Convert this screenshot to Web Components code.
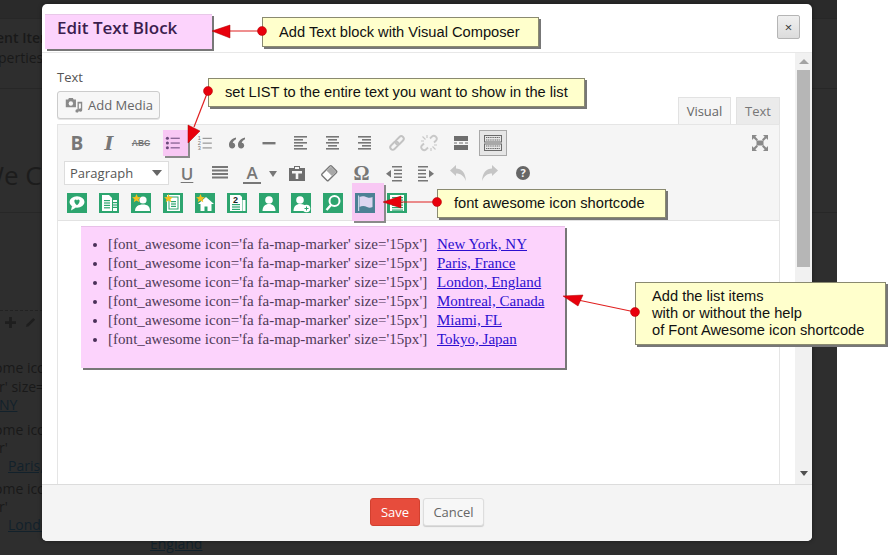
<!DOCTYPE html>
<html lang="en"><head><meta charset="utf-8"><title>Edit Text Block</title>
<style>
html,body{margin:0;padding:0;background:#fff}
body{width:896px;height:555px;overflow:hidden;position:relative;font-family:"Open Sans",sans-serif}
</style></head><body>
<bg-page></bg-page>
<modal-window></modal-window>
<anno-layer></anno-layer>
<script>
const G='#777';
const lines=(arr,c=G,w=1.6)=>arr.map(l=>`<rect x="${l[0]}" y="${l[1]}" width="${l[2]}" height="${w}" fill="${c}"/>`).join('');
const star=`<path d="M5.5 1l1.3 2.9 3.1.3-2.4 2 .8 3-2.8-1.6-2.8 1.6.8-3-2.4-2 3.1-.3z" fill="#f3c01e"/>`;
const dlines=(x,y,w,n,s=2.4)=>Array.from({length:n},(_,i)=>`<rect x="${x}" y="${y+i*s}" width="${w}" height="1.2" fill="#2da56f"/>`).join('');
const person=`<circle cx="10" cy="7" r="3.8" fill="#fff"/><path d="M3.5 18c0-4.5 2.8-7 6.5-7s6.5 2.500 6.500 7z" fill="#fff"/>`;
const GREEN={
 chat:`<ellipse cx="10" cy="9" rx="7.500" ry="5.800" fill="#fff"/><path d="M5 13l-1 4.500 5-3z" fill="#fff"/><path d="M10 12.200C6.500 9.500 7 6.500 8.600 6.500c.7 0 1.100.4 1.400 1 .3-.6.7-1 1.400-1 1.600 0 2.100 3-1.400 5.700z" fill="#2da56f"/>`,
 docs:`<path d="M3 2h7l3 3v13H3z" fill="#fff"/>${dlines(5,7,6,4)}<rect x="14" y="7" width="4" height="11" fill="#fff"/>${dlines(14,9,4,3)}`,
 pstar:`<circle cx="12" cy="7" r="3.600" fill="#fff"/><path d="M4 18c0-4.500 3.500-6.500 8-6.500s7 2 7 6.500z" fill="#fff"/>${star}`,
 dstar:`<path d="M4 2h13v16H4z" fill="#fff"/><rect x="5.500" y="3.500" width="10" height="13" fill="#2da56f"/><rect x="6.500" y="4.500" width="8" height="11" fill="#fff"/>${dlines(8,8,5,3)}${star}`,
 hstar:`<path d="M11 4l8 7h-2.500v7h-4v-4.500h-3V18h-4v-7H3z" fill="#fff"/>${star}`,
 doc2:`<path d="M3 2h10l2 2v14H3z" fill="#fff"/><text x="8.500" y="9.500" font-family="Liberation Sans" font-weight="700" font-size="9" text-anchor="middle" fill="#222">2</text>${dlines(5,11,8,3)}<rect x="15.500" y="7" width="3" height="11" fill="#fff"/>`,
 person:person,
 padd:`<circle cx="9" cy="7" r="3.800" fill="#fff"/><path d="M2.500 18c0-4.500 2.800-7 6.500-7s5 1 6 3v4z" fill="#fff"/><circle cx="15.500" cy="15.500" r="3.800" fill="#fff"/><path d="M13.500 15h4v1h-4zM15 13.500h1v4h-1z" fill="#2da56f"/>`,
 search:`<circle cx="11.500" cy="8" r="5" fill="none" stroke="#fff" stroke-width="2"/><path d="M8 12l-4.500 5" stroke="#fff" stroke-width="2.400"/>`,
 flag:`<path d="M3 2.500h1.200V18H3z" fill="#c9d4e8"/><path d="M4.500 4c3-1.500 5.500-.5 7.500.3s4 .7 5.500-.3v10c-2 1-3.500 1-5.500 0s-5-1.500-7.500 0z" fill="#dcd6f0"/>`,
 dlist:`<path d="M3 2h14v16H3z" fill="#fff"/>${dlines(5,4,11,6,2.500)}`
};
const five=(s)=>lines(s.map((r,i)=>[r[0],3+i*3,r[1]]));
const SMALL={ul:16,ol:16};
const TB={
 ul:`<g fill="#6a4a7a"><circle cx="3" cy="4" r="1.900"/><circle cx="3" cy="10" r="1.900"/><circle cx="3" cy="16" r="1.900"/><rect x="7" y="3.400" width="11.500" height="1.300"/><rect x="7" y="9.400" width="11.500" height="1.300"/><rect x="7" y="15.400" width="11.500" height="1.300"/></g>`,
 ol:`<g fill="#888"><rect x="7" y="3.500" width="11.500" height="1.300"/><rect x="7" y="9.500" width="11.500" height="1.300"/><rect x="7" y="15.500" width="11.500" height="1.300"/></g><g font-family="Liberation Sans" font-size="7" fill="#777"><text x="1" y="6">1</text><text x="1" y="12.300">2</text><text x="1" y="18.500">3</text></g>`,
 quote:`<path d="M9 4.500C5 5.500 2 8 2 12c0 2 1.200 3.500 3.200 3.500 1.700 0 3-1.200 3-2.900 0-1.600-1.100-2.700-2.500-2.800.4-1.500 1.700-2.800 3.300-3.600zM18 4.500c-4 1-7 3.500-7 7.500 0 2 1.200 3.500 3.200 3.500 1.700 0 3-1.200 3-2.900 0-1.600-1.100-2.700-2.500-2.800.4-1.500 1.700-2.800 3.300-3.600z" fill="${G}"/>`,
 hr:`<rect x="3.500" y="9" width="13" height="2.400" fill="${G}"/>`,
 al:five([[3,13],[3,9],[3,13],[3,9],[3,13]]),
 ac:five([[3,13],[5,9],[3,13],[5,9],[3,13]]),
 ar:five([[3,13],[7,9],[3,13],[7,9],[3,13]]),
 link:`<g fill="none" stroke="#c2c2c2" stroke-width="1.900" transform="rotate(-45 10 10)"><rect x="1.500" y="7.500" width="9.500" height="5" rx="2.500"/><rect x="9" y="7.500" width="9.500" height="5" rx="2.500"/></g>`,
 unlink:`<g fill="none" stroke="#c8c8c8" stroke-width="1.900"><path d="M11 5.500l1.800-1.800a2.900 2.900 0 0 1 4 0 2.900 2.900 0 0 1 0 4.100L15 9.500M9 14.500l-1.800 1.800a2.900 2.900 0 0 1-4 0 2.900 2.900 0 0 1 0-4.100L5 10.500"/><path d="M3.500 3.500l3 3M16.500 16.500l-3-3M8 2v3M2 8h3M12 18v-3M18 12h-3" stroke-width="1.200"/></g>`,
 more:`<rect x="3" y="3" width="14" height="5" fill="#6e6e6e"/><rect x="3" y="12" width="14" height="5" fill="#6e6e6e"/><path d="M3 9.500h3v1H3zM8 9.500h4v1H8zM14 9.500h3v1h-3z" fill="#6e6e6e"/>`,
 kb:`<g fill="none" stroke="#6a6a6a"><rect x="1.500" y="2.500" width="17" height="6.500"/><rect x="1.500" y="11" width="17" height="6.500"/><path d="M3 4.500h14M3 7h14M3 13h14M3 15.500h14" stroke-width="1.200" stroke-dasharray="1.200 .6"/></g>`,
 just:lines([[2,3,16],[2,6.500,16],[2,10,16],[2,13.500,16]],G,2),
 paste:`<path d="M2 5h5V3h6v2h5v13H2z" fill="#6e6e6e"/><rect x="8" y="4" width="4" height="2" fill="#f5f5f5"/><path d="M5 8h10v2.500h-3.700V16H8.700v-5.500H5z" fill="#f5f5f5"/>`,
 eraser:`<path d="M12.500 3l5 5a1 1 0 0 1 0 1.400L9.400 17.500a1 1 0 0 1-1.400 0l-5-5a1 1 0 0 1 0-1.400L11 3a1 1 0 0 1 1.500 0z" fill="#fff" stroke="#777" stroke-width="1.400"/><path d="M12 3.500l5.300 5.300-4.300 4.300-5.400-5.400z" fill="#a8a8a8"/>`,
 outdent:`<path d="M8 3h10v1.600H8zM10 6.500h8v1.600h-8zM10 10h8v1.600h-8zM10 13.500h8v1.600h-8zM8 17h10v1.600H8zM2 10.800l5-3.800v7.600z" fill="${G}"/>`,
 indent:`<path d="M2 3h10v1.600H2zM2 6.500h8v1.600H2zM2 10h8v1.600H2zM2 13.500h8v1.600H2zM2 17h10v1.600H2zM18 10.800L13 7v7.600z" fill="${G}"/>`,
 undo:`<path d="M2 7.500L8 2v3.500c5.500 0 9.500 4 10 12.500-2-5-5-7.500-10-7.500V13z" fill="#c5c5c5"/>`,
 redo:`<path d="M18 7.500L12 2v3.500C6.500 5.500 2.500 9.500 2 18c2-5 5-7.500 10-7.500V13z" fill="#c5c5c5"/>`,
 full:`<g fill="#8a8a8a"><rect x="6.500" y="7.500" width="7" height="5"/><path d="M2 2h5L5.300 3.700 8 6.500 6.500 8 3.700 5.300 2 7zM18 2v5l-1.700-1.700L13.500 8 12 6.500l2.700-2.800L13 2zM2 18v-5l1.700 1.700L6.500 12 8 13.500l-2.700 2.800L7 18zM18 18h-5l1.700-1.700L12 13.500l1.500-1.500 2.800 2.700L18 13z"/></g>`
};
function def(name,css,html){
  customElements.define(name,class extends HTMLElement{
    connectedCallback(){ if(this.shadowRoot) return;
      const r=this.attachShadow({mode:'open'});
      r.innerHTML=`<style>${css}</style>`+(typeof html==='function'?html(this):html);
    }
  });
}
/* dark page behind the dialog */
def('bg-page',`
:host{display:block;width:837px;height:555px;background:#2e2e2e;color:#191919;overflow:hidden;font:14px/18px "Open Sans",sans-serif}
.r{white-space:nowrap}
.hr{border-top:1px solid #272727}
u{color:#12212b}
`,`
<div style="height:18px;background:#2a2a2a"></div><div class="hr"></div>
<div class="r" style="height:19px;margin-top:10px;margin-left:-4px;font-weight:600">ent Item</div>
<div class="r" style="height:20px;margin-top:1px;margin-left:-2px">perties'</div>
<div class="hr" style="margin-top:19px;height:69px"></div>
<div class="r" style="height:34px;margin-left:-20px;font-size:26px;line-height:34px;color:#1c1c1c">We Co</div>
<div class="hr" style="margin-top:20px;height:97px"></div>
<div style="border-top:1px dashed #222;height:35px;display:flex;gap:9px;padding:6px 0 0 5px;box-sizing:border-box"><svg width="11" height="11" viewBox="0 0 12 12"><path d="M4.500 0h3v4.500H12v3H7.500V12h-3V7.500H0v-3h4.500z" fill="#1e1e1e"/></svg><svg width="11" height="11" viewBox="0 0 12 12"><path d="M1 11l1-3 7-7 2 2-7 7z" fill="#1e1e1e"/></svg></div>
<div class="r" style="height:19px;margin-left:-6px;margin-top:14px">ome icon</div>
<div class="r" style="height:18px;margin-left:-1px">r' size=</div>
<div class="r" style="height:25px;margin-left:-1px"><u>NY</u></div>
<div class="r" style="height:18px;margin-left:-6px">ome icon</div>
<div class="r" style="height:18px;margin-left:-1px">r'</div>
<div class="r" style="height:23px;margin-left:8px"><u>Paris, France</u></div>
<div class="r" style="height:18px;margin-left:-6px">ome icon</div>
<div class="r" style="height:18px;margin-left:-1px">r'</div>
<div class="r" style="height:19px;margin-left:8px"><u>London</u></div>
<div class="r" style="margin-left:150px"><u>England</u></div>
`);
/* toolbar button: fixed-width cell with centred icon */
def('tb-btn',`
:host{display:flex;align-items:center;justify-content:center;width:32px;height:26px;flex:none;position:relative;color:#777}
svg{display:block;position:relative}
.hi{position:absolute;background:#f8c8f4;box-shadow:2px 2px 0 #8a8a8a;}
`,h=>{
  const n=h.getAttribute('icon'),s=h.getAttribute('hi');
  const hi=s?`<div class="hi" style="${s}"></div>`:'';
  const z=SMALL[n]||20;
  return hi+(n?`<svg width="${z}" height="${z}" viewBox="0 0 20 20">${TB[n]}</svg>`:'<slot></slot>');
});
def('sc-icon',`
:host{display:flex;align-items:center;justify-content:center;width:32px;height:20px;flex:none;position:relative}
.hi{position:absolute;left:3px;top:-10px;width:32px;height:38px;background:#f8c8f4;box-shadow:2px 2px 0 #8a8a8a}
svg{display:block;position:relative}
`,h=>{
  const n=h.getAttribute('name'),f=n==='flag';
  return (f?'<div class="hi"></div>':'')+`<svg width="20" height="20" viewBox="0 0 20 20"><rect width="20" height="20" fill="${f?'#4c8094':'#2da56f'}"/>${GREEN[n]}</svg>`;
});
def('edit-toolbar',`
:host{display:block;height:97px;box-sizing:border-box;background:#f5f5f5;border:1px solid #e5e5e5;border-bottom-color:#e2e2e2;padding:5px 0 0 3px;font-family:"Open Sans",sans-serif}
.row{display:flex;align-items:center}
.one{height:26px}
.two{height:30px;margin-top:2px}
.three{height:20px;margin-top:5px}
.sel{width:105px;height:24px;box-sizing:border-box;margin:0 2px 0 3px;background:#fff;border:1px solid #ddd;display:flex;align-items:center;justify-content:space-between;padding:0 6px 0 5px;font-size:13px;color:#555}
.sel i{width:0;height:0;border:5px solid transparent;border-top:6px solid #666;border-bottom:0}
.car{width:0;height:0;border:4.500px solid transparent;border-top:6px solid #777;border-bottom:0;margin:2px 4.500px 0 .5px;flex:none}
.b{font:700 19px "Open Sans",sans-serif;color:#777}
.i{font:italic 700 19px "DejaVu Serif",serif;color:#777}
.abc{font:700 8.500px "Liberation Sans",sans-serif;color:#777;text-decoration:line-through}
.u{font:600 17px "Open Sans",sans-serif;color:#777;text-decoration:underline;text-underline-offset:2px}
.a{font:600 17px/19px "Open Sans",sans-serif;color:#777;border-bottom:2px solid #777;padding:0 3px}
.o{font:700 20px "Liberation Serif",serif;color:#777}
.h{width:14px;height:14px;border-radius:50%;background:#666;color:#f5f5f5;font:700 11px/14px "Open Sans",sans-serif;text-align:center;display:block}
.act{width:28px;height:26px;box-sizing:border-box;background:#e6e6e6;border:1px solid #a8a8a8;display:flex;align-items:center;justify-content:center;margin:0 2px}
.act svg{display:block}
.sp{flex:1}
.fs{margin-right:3px}
`,`
<div class="row one">
 <tb-btn><span class="b">B</span></tb-btn><tb-btn><span class="i">I</span></tb-btn><tb-btn><span class="abc">ABC</span></tb-btn>
 <tb-btn icon="ul" hi="left:6px;top:0;width:25px;height:26px"></tb-btn><tb-btn icon="ol"></tb-btn><tb-btn icon="quote"></tb-btn><tb-btn icon="hr"></tb-btn>
 <tb-btn icon="al"></tb-btn><tb-btn icon="ac"></tb-btn><tb-btn icon="ar"></tb-btn><tb-btn icon="link"></tb-btn><tb-btn icon="unlink"></tb-btn><tb-btn icon="more"></tb-btn>
 <div class="act"><svg width="20" height="20" viewBox="0 0 20 20">${TB.kb}</svg></div>
 <div class="sp"></div><tb-btn class="fs" style="margin-right:3px" icon="full"></tb-btn>
</div>
<div class="row two">
 <div class="sel">Paragraph<i></i></div>
 <tb-btn><span class="u">U</span></tb-btn><tb-btn icon="just" style="width:33px"></tb-btn><tb-btn><span class="a">A</span></tb-btn><div class="car"></div>
 <tb-btn icon="paste"></tb-btn><tb-btn icon="eraser"></tb-btn><tb-btn style="width:33px"><span class="o">&#937;</span></tb-btn><tb-btn icon="outdent"></tb-btn><tb-btn icon="indent"></tb-btn><tb-btn icon="undo"></tb-btn><tb-btn icon="redo"></tb-btn>
 <tb-btn style="margin-left:1px"><span class="h">?</span></tb-btn>
</div>
<div class="row three">
 <sc-icon name="chat"></sc-icon><sc-icon name="docs"></sc-icon><sc-icon name="pstar"></sc-icon><sc-icon name="dstar"></sc-icon><sc-icon name="hstar"></sc-icon><sc-icon name="doc2"></sc-icon><sc-icon name="person"></sc-icon><sc-icon name="padd"></sc-icon><sc-icon name="search"></sc-icon><sc-icon name="flag"></sc-icon><sc-icon name="dlist"></sc-icon>
</div>
`);
def('list-box',`
:host{display:block;width:484px;height:142px;box-sizing:border-box;background:#fcd3fc;box-shadow:2px 2px 0 #777;border-top:1px solid #e8c0e8;margin:5px 0 0 23px;color:#4f3a58;font:15px/19px "Liberation Serif",serif}
ul{margin:0;padding:8px 0 0 27px}
li{white-space:nowrap}
li::marker{color:#4a3058}
span{display:inline-block;width:329px;letter-spacing:.04px}
a{color:#2c0fd0;text-decoration:underline}
`,h=>{
  const c=['New York, NY','Paris, France','London, England','Montreal, Canada','Miami, FL','Tokyo, Japan'];
  return '<ul>'+c.map(x=>`<li><span>[font_awesome icon='fa fa-map-marker' size='15px']</span><a href="#">${x}</a></li>`).join('')+'</ul>';
});
def('pg-scrollbar',`
:host{display:flex;flex-direction:column;width:17px;flex:none;background:#f1f1f1;box-sizing:border-box;padding:0 2px 2px;position:relative}
.btn{height:17px;flex:none;display:flex;align-items:center;justify-content:center}
.up{width:0;height:0;border:5px solid transparent;border-bottom:5px solid #a3a3a3;border-top:0}
.dn{width:0;height:0;border:4px solid transparent;border-top:5px solid #505050;border-bottom:0}
.th{height:197px;background:#b6b6b6;flex:none}
.sp{flex:1}
`,`<div class="btn"><div class="up"></div></div><div class="th"></div><div class="sp"></div><div class="btn"><div class="dn"></div></div>`);
def('modal-window',`
:host{position:absolute;left:42px;top:4px;width:770px;height:537px;background:#fff;border-radius:5px;display:flex;flex-direction:column;overflow:hidden;box-shadow:0 0 4px rgba(0,0,0,.4);font-family:"Open Sans",sans-serif}
header{height:48px;flex:none;border-bottom:1px solid #e8e8e8;display:flex;justify-content:space-between;box-sizing:content-box}
.title{margin:10px 0 0 3px;width:167px;height:35px;box-sizing:border-box;background:#fcd3fc;box-shadow:2px 2px 0 #777;border-top:1px solid #e8c8e8;padding-left:12px;font:600 17px/26px "Open Sans",sans-serif;color:#3b1d4e}
.x{margin:11px 12px 0 0;width:23px;height:24px;box-sizing:border-box;background:linear-gradient(#f0f0f0,#dcdcdc);border:1px solid #b5b5b5;border-radius:2px;display:flex;align-items:center;justify-content:center;font:13px/1 "Open Sans",sans-serif;color:#333}
.body{flex:1;display:flex;min-height:0}
main{flex:1;min-width:0;display:flex;flex-direction:column;padding:0 15px}
label{display:block;font-size:13px;line-height:18px;color:#555;margin-top:15px;height:20px}
.bar{display:flex;justify-content:space-between;align-items:flex-end;height:36px}
.media{width:103px;height:28px;box-sizing:border-box;margin-bottom:5px;background:#f7f7f7;border:1px solid #ccc;border-radius:3px;box-shadow:0 1px 0 #e5e5e5;display:flex;align-items:center;gap:5px;padding-left:7px;font-size:13px;color:#666}
.tabs{display:flex;gap:5px;align-items:flex-end;height:27px}
.tab{height:27px;box-sizing:border-box;border:1px solid #e2e2e2;border-bottom:0;display:flex;align-items:center;justify-content:center;font-size:13px;color:#666}
.v{width:53px;background:#f5f5f5}
.t{width:44px;background:#ebebeb;color:#777}
.ed{flex:1;border:1px solid #e5e5e5;border-top:0;border-bottom:0;min-height:0}
footer{height:43px;flex:none;background:#f4f4f4;border-top:1px solid #dcdcdc;display:flex;justify-content:center;align-items:flex-start;gap:3px;padding-top:13px;box-sizing:content-box}
.s,.c{height:28px;box-sizing:border-box;border-radius:3px;font-size:13px;display:flex;align-items:center;justify-content:center}
.s{width:50px;background:#e74c3c;color:#fff;border:1px solid #d2402f}
.c{width:61px;background:#f7f7f7;color:#666;border:1px solid #ddd;box-shadow:0 1px 1px #ccc}
`,`
<header><div class="title">Edit Text Block</div><div class="x">&#215;</div></header>
<div class="body"><main>
 <label>Text</label>
 <div class="bar"><div class="media"><svg width="18" height="16" viewBox="0 0 23 20"><path d="M1 3h3l1-2h5l1 2h3v10H1z" fill="#8a8a8a"/><circle cx="7.500" cy="8" r="2.800" fill="#f7f7f7"/><path d="M16 6h6v10.500a2.200 2.200 0 1 1-1.700-2.100V8h-2.600v9.500a2.200 2.200 0 1 1-1.700-2.100z" fill="#8a8a8a"/></svg>Add Media</div>
 <div class="tabs"><div class="tab v">Visual</div><div class="tab t">Text</div></div></div>
 <edit-toolbar></edit-toolbar>
 <div class="ed"><list-box></list-box></div>
</main><pg-scrollbar></pg-scrollbar></div>
<footer><div class="s">Save</div><div class="c">Cancel</div></footer>
`);
def('call-out',`
:host{position:absolute;display:block;box-sizing:border-box;background:#ffffcc;border:1px solid #8a8a70;box-shadow:2px 2px 0 #777;font:14.670px/17px "Liberation Sans",sans-serif;color:#111;white-space:nowrap;padding-left:16px}
`,`<slot></slot>`);
def('anno-layer',`
:host{position:absolute;left:0;top:0;width:896px;height:555px;display:block;pointer-events:none}
svg{position:absolute;left:0;top:0}
`,`
<slot></slot>
<svg width="896" height="555" viewBox="0 0 896 555">
 <g stroke="#e02020" stroke-width="1.200" fill="none">
  <path d="M262 31H225"/><path d="M208 91L194 127"/><path d="M437 202H398"/><path d="M635 312L578 300"/>
 </g>
 <g fill="#e8000c" stroke="#a00" stroke-width=".5">
  <path d="M212 31l18-6v13z"/><path d="M188 143v-18l12 6z"/><path d="M383 202l18-6v12z"/><path d="M563 296l20-1-5 11z"/>
  <circle cx="262" cy="31" r="4.500"/><circle cx="208" cy="91" r="4.500"/><circle cx="437" cy="202" r="4.500"/><circle cx="635" cy="312" r="4.500"/>
 </g>
</svg>`);
document.querySelector('anno-layer').innerHTML=`
<call-out style="left:262px;top:17px;width:277px;height:30px;line-height:28px">Add Text block with Visual Composer</call-out>
<call-out style="left:208px;top:78px;width:377px;height:29px;line-height:27px">set LIST to the entire text you want to show in the list</call-out>
<call-out style="left:437px;top:189px;width:229px;height:29px;line-height:27px">font awesome icon shortcode</call-out>
<call-out style="left:635px;top:282px;width:251px;height:63px;padding-top:5px">Add the list items<br>with or without the help<br>of Font Awesome icon shortcode</call-out>`;
</script>
</body></html>
